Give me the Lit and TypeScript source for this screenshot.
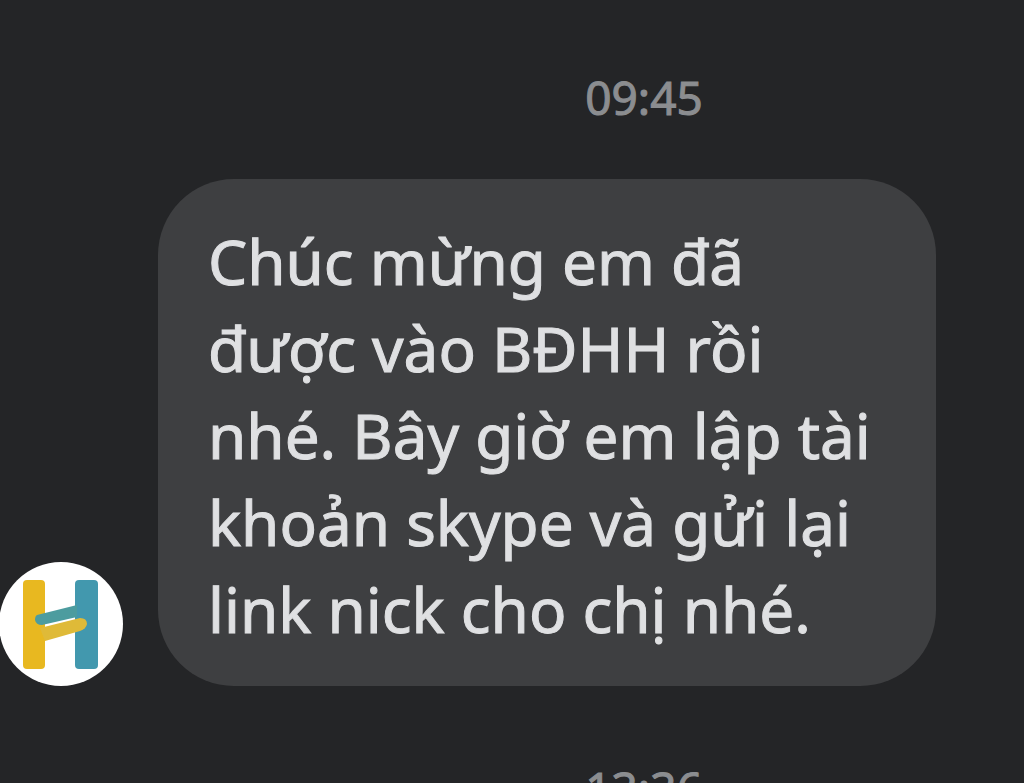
import { LitElement, html, css } from "lit";
import { customElement } from "lit/decorators.js";

@customElement("chat-avatar")
class ChatAvatar extends LitElement {
  static styles = css`
    :host {
      display: block;
      flex: none;
      width: 124px;
      height: 124px;
    }
    .logo {
      display: block;
      width: 100%;
      height: 100%;
    }
  `;

  render() {
    return html`
      <svg class="logo" viewBox="0 0 124 124" role="img" aria-label="H">
        <circle cx="61" cy="62" r="62" fill="#fff" />
        <rect x="23" y="18" width="22" height="89" rx="4" fill="#e8b820" />
        <rect x="75" y="18" width="23" height="89" rx="4" fill="#4298ae" />
        <path d="M40 66 L80 56 Q87 56 87 62 Q86 67 80 69 L45 79 Z" fill="#dfba38" />
        <path d="M37 53 L77 43 V55 L42 63 Q36 63 35 58 Q35 54 37 53 Z" fill="#4c9c9f" />
      </svg>
    `;
  }
}

@customElement("app-root")
class AppRoot extends LitElement {
  static styles = css`
    :host {
      display: block;
      height: 100vh;
      overflow: hidden;
      background: #242527;
      font-family: "Noto Sans", "Open Sans", sans-serif;
    }
    .thread {
      display: flex;
      flex-direction: column;
      padding-top: 67px;
    }
    .time {
      display: block;
      padding-left: 264px;
      text-align: center;
      font-size: 46px;
      line-height: 60px;
      color: #8b8d90;
      -webkit-text-stroke: 1px #8b8d90;
    }
    .message {
      display: flex;
      align-items: flex-end;
      gap: 34px;
      margin: 52px 0 72px;
      padding-right: 88px;
    }
    .bubble {
      flex: 1;
      margin: 0;
      padding: 39px 52px 33px 50px;
      border-radius: 76px;
      background: #3e3f41;
      color: #dfe0e2;
      -webkit-text-stroke: 1px #dfe0e2;
      font-size: 62px;
      line-height: 87px;
    }
  `;

  render() {
    return html`
      <main class="thread">
        <time class="time">09:45</time>
        <div class="message">
          <chat-avatar></chat-avatar>
          <p class="bubble">
            Chúc mừng em đã được vào BĐHH rồi nhé. Bây giờ em lập tài khoản
            skype và gửi lại link nick cho chị nhé.
          </p>
        </div>
        <time class="time">13:36</time>
      </main>
    `;
  }
}
